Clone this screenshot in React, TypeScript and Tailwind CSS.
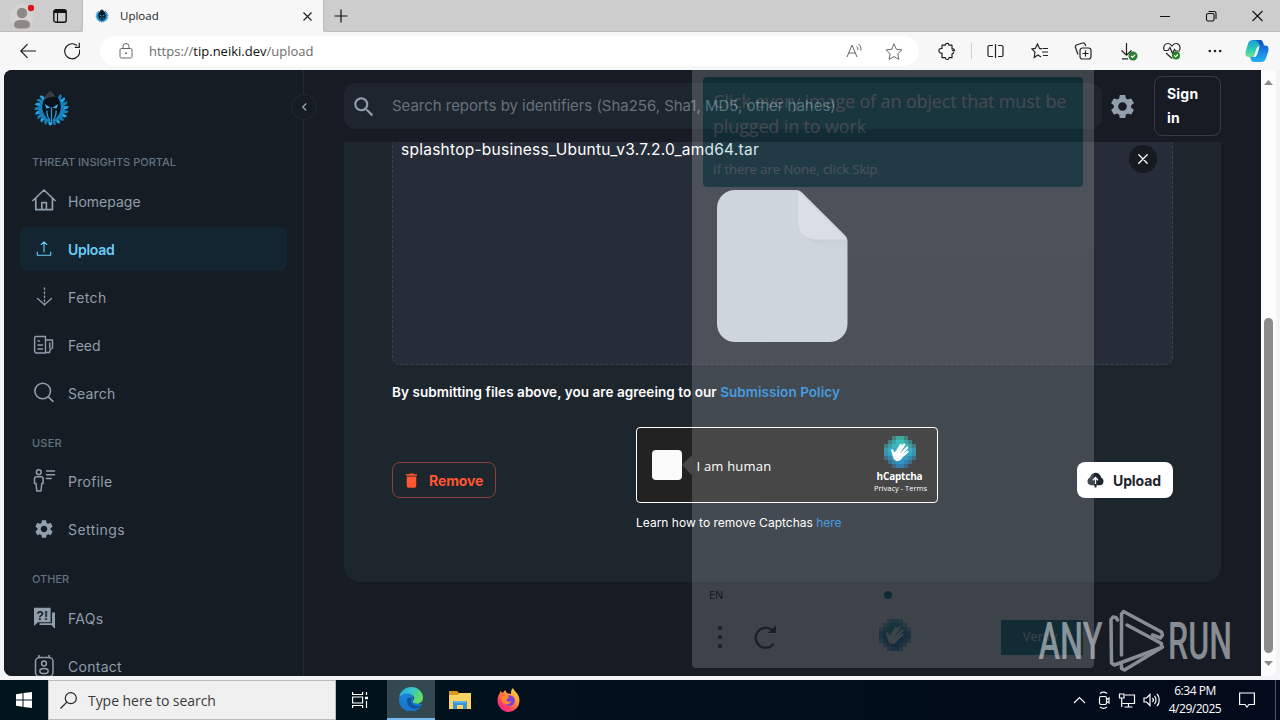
import type { ReactNode } from 'react'
import { MdDelete, MdSearch, MdSettings } from 'react-icons/md'

const PORTAL_LINKS = [
  { label: 'Homepage', icon: <HomeIcon />, track: '' },
  { label: 'Upload', icon: <UploadIcon />, track: 'tracking-[-0.3px]', active: true },
  { label: 'Fetch', icon: <FetchIcon />, track: 'tracking-[0.03em]' },
  { label: 'Feed', icon: <FeedIcon />, track: '' },
  { label: 'Search', icon: <SearchIcon />, track: 'tracking-[0.01em]' },
]

const USER_LINKS = [
  { label: 'Profile', icon: <ProfileIcon />, track: 'tracking-[0.02em]' },
  { label: 'Settings', icon: <MdSettings size={22} />, track: 'tracking-[0.03em]' },
]

const OTHER_LINKS = [
  { label: 'FAQs', icon: <FaqIcon />, track: 'tracking-[0.02em]' },
  { label: 'Contact', icon: <ContactIcon />, track: 'tracking-[0.02em]' },
]

function Stroke({
  size = 24,
  width = 1.4,
  children,
}: {
  size?: number
  width?: number
  children: ReactNode
}) {
  return (
    <svg
      width={size}
      height={size}
      viewBox="0 0 24 24"
      fill="none"
      stroke="currentColor"
      strokeWidth={width}
      strokeLinecap="round"
      strokeLinejoin="round"
      className="shrink-0"
    >
      {children}
    </svg>
  )
}

function HomeIcon() {
  return (
    <Stroke width={1.7}>
      <path d="M1 11.500 12 1 23 11.500M3.800 9.500v11.200h16.600V9.500M9.800 20.500v-6.800h4.600v6.800" />
    </Stroke>
  )
}

function UploadIcon() {
  return (
    <Stroke width={1.1}>
      <path d="M12 15V5M9.300 7.500 12 4.800l2.700 2.700M5.300 15v3.200h13.400V15" />
    </Stroke>
  )
}

function FetchIcon() {
  return (
    <Stroke width={1.3}>
      <path d="M5.500 13.500l7 6.300 7-6.300" />
      <path d="M12.500 3v17" strokeDasharray="1.500 2.500" />
    </Stroke>
  )
}

function FeedIcon() {
  return (
    <Stroke width={1.4}>
      <path d="M3.500 3.500h10v16.500H3.800L2.600 18.300V4.500zM13.800 7h6.700v8l-2.200 1.500-.8 3h-3.700M17.700 10v5M6 8h1.500M6 12h4.500M6 16h4.500" />
    </Stroke>
  )
}

function SearchIcon() {
  return (
    <Stroke width={1.600}>
      <circle cx="10.700" cy="10" r="7.800" />
      <path d="m16.300 15.800 4.700 4.500" />
    </Stroke>
  )
}

function ProfileIcon() {
  return (
    <Stroke width={1.500}>
      <circle cx="6.800" cy="3.200" r="2.400" />
      <path d="M4.500 7.800h4.600c1.400 0 2 .8 2 2v4.700H9.800L9 22H4.800L4 14.500H2.500V9.800c0-1.200.8-2 2-2z" />
      <path d="M14.500 2h8M14.500 5.800h8M14.500 9.600h4.700" />
    </Stroke>
  )
}

function FaqIcon() {
  return (
    <svg width="24" height="24" viewBox="0 0 24 24" fill="currentColor">
      <path d="M2 1.800h16.600v14.400H6L2 20z" />
      <path d="M20 6.500h3v16.300L19.200 19H7.500v-1.800H20z" />
      <text
        x="10.200"
        y="13.600"
        fontSize="12.500"
        fontWeight="700"
        textAnchor="middle"
        fill="#161c24"
        fontFamily="Liberation Sans, sans-serif"
      >
        ?!
      </text>
    </svg>
  )
}

function ContactIcon() {
  return (
    <Stroke width={1.500}>
      <rect x="3.500" y="3.500" width="17.500" height="19" rx="4" />
      <circle cx="12" cy="9.500" r="2.400" />
      <ellipse cx="12" cy="17" rx="4.200" ry="2.600" />
      <path d="M7 1.500v2M17 1.500v2" />
    </Stroke>
  )
}

function Crest({ size }: { size: number }) {
  const feathers = Array.from({ length: 18 }, (_, i) => -52 + (i * 284) / 17)
  return (
    <svg width={size} height={size} viewBox="0 0 36 36" className="shrink-0">
      {feathers.map((deg, i) => (
        <path
          key={deg}
          d="M26 15.800 35 16.300l-1.500 2.400L26 20.500z"
          fill={i % 2 ? '#22a3e6' : '#157fb8'}
          transform={`rotate(${deg} 18 18)`}
        />
      ))}
      <ellipse cx="18" cy="19" rx="12.500" ry="12" fill="#1583bb" />
      <path d="M18 1c-5 3-8.500 8-9 15-.4 6 3.500 11 9 16 5.500-5 9.400-10 9-16C26.500 9 23 4 18 1z" fill="#07121b" />
      <path d="M17 1c-4 2-6 6-6 9 3-3 8-4 11-3C21 4 19 2 17 1z" fill="#3b3a3f" />
      <path d="m11.500 13.500 5.500 3.800-4 .7zM24.500 13.500 19 17.300l4 .7z" fill="#39b4f2" />
      <path d="M18 17v17M13.500 20c0 4 1.500 8 3 10M22.500 20c0 4-1.500 8-3 10" stroke="#2f9ad6" strokeWidth="1.300" fill="none" />
    </svg>
  )
}

const PIXEL_ROWS = ['..1221..', '.123321.', '12333321', '23333332', '23333332', '12333321', '.123321.', '..1221..']
const PIXEL_COLORS = ['#16b5a8', '#14b0ab', '#13a9b0', '#109eb6', '#0e92b9', '#0b87bc', '#0a7dbd', '#0874be']

function HandLogo() {
  return (
    <svg width="32" height="32" viewBox="0 0 32 32" className="shrink-0">
      {PIXEL_ROWS.map((row, y) =>
        row.split('').map((cell, x) =>
          cell === '.' ? null : (
            <rect
              key={`${x}-${y}`}
              x={x * 4}
              y={y * 4}
              width="4"
              height="4"
              fill={PIXEL_COLORS[y]}
              opacity={cell === '1' ? 0.5 : cell === '2' ? 0.8 : 1}
            />
          ),
        )
      )}
      <g stroke="#fff" strokeWidth="2.400" strokeLinecap="round" fill="none">
        <path d="m12 17 4.800-8M14.200 17.500 20.200 8.500M16 19l7.300-7.500M17 21l6.500-5.200" />
        <path d="M10 20 8.300 14.500" />
      </g>
      <path d="M8.800 18c.8-2 3-3 5.200-2.500l5 3c0 3-2 6.500-5.500 6.500-3 0-4.900-2.500-4.700-7z" fill="#fff" />
    </svg>
  )
}

function NavGroup({
  links,
}: {
  links: { label: string; icon: ReactNode; track: string; active?: boolean }[]
}) {
  return (
    <nav className="flex flex-col gap-1">
      {links.map((link) => (
        <a
          key={link.label}
          className={
            link.active
              ? 'flex h-11 items-center gap-3 rounded-lg bg-[#142532] pl-3 text-[14px] font-semibold text-[#68cdf9]'
              : 'flex h-11 items-center gap-3 rounded-lg pl-3 text-[14px] text-[#919eab]'
          }
        >
          <span className="flex w-6 justify-center">{link.icon}</span>
          <span className={link.track}>{link.label}</span>
        </a>
      ))}
    </nav>
  )
}

function TitleBar() {
  return (
    <div className="flex h-8 shrink-0 bg-[#cdcdcd]">
      <div className="flex w-[83px] items-center rounded-br-md border-r border-b border-[#bdbdbd]">
        <svg width="24" height="26" viewBox="0 0 24 26" className="ml-[10px]">
          <circle cx="12" cy="13" r="11.500" fill="#d4d3d2" />
          <circle cx="12" cy="10" r="5.200" fill="#8c8987" />
          <path d="M4 22c0-4 3-5 8-5s8 1 8 5c0 3-3 3.500-8 3.500S4 25 4 22z" fill="#8c8987" />
          <circle cx="21" cy="5" r="3.200" fill="#e0131c" />
        </svg>
        <svg width="14" height="14" viewBox="0 0 14 14" fill="none" stroke="#111" className="ml-[19px]">
          <rect x=".8" y=".8" width="12.400" height="12.400" rx="2" strokeWidth="1.400" />
          <path d="M1 2.500h12" strokeWidth="3" />
          <path d="M4.500 3v10" />
        </svg>
      </div>
      <div className="flex w-[240px] items-center bg-[#f7f7f7] text-[12px] text-[#1b1b1b]">
        <span className="ml-3">
          <Crest size={14} />
        </span>
        <span className="ml-[11px] flex-1 font-['Open_Sans',sans-serif] text-[11.500px]">Upload</span>
        <svg width="9" height="9" viewBox="0 0 9 9" stroke="#222" strokeWidth="1.200" className="mr-[11px]">
          <path d="m.5.5 8 8M8.500.5l-8 8" />
        </svg>
      </div>
      <div className="flex flex-1 items-center rounded-bl-md border-b border-l border-[#bdbdbd]">
        <svg width="14" height="14" viewBox="0 0 14 14" stroke="#111" strokeWidth="1.200" className="ml-[10px]">
          <path d="M7 .5v13M.5 7h13" />
        </svg>
        <svg
          width="103"
          height="12"
          viewBox="0 0 103 12"
          fill="none"
          stroke="#111"
          strokeWidth="1.100"
          className="mr-[17px] ml-auto"
        >
          <path d="M0 6.500h10M92.500 1l10 10M102.500 1l-10 10" />
          <rect x="46.500" y="3.500" width="7.500" height="7.500" rx="1.500" />
          <path d="M48.500 1.500h5.500a2 2 0 0 1 2 2V9" />
        </svg>
      </div>
    </div>
  )
}

function AddressBar() {
  return (
    <div className="flex h-[38px] shrink-0 items-center bg-[#f7f7f7] text-[#1b1b1b]">
      <svg width="60" height="18" viewBox="0 0 60 18" fill="none" stroke="#1b1b1b" strokeWidth="1.200" className="ml-[20px]">
        <path d="M16 9H.8M7.500 2.200.8 9l6.700 6.800" />
        <path d="M59.500 7.500A7.500 7.500 0 1 1 57 3.500M59.300.8v4.500h-4.500" />
      </svg>
      <div className="ml-5 flex h-[30px] w-[819px] items-center rounded-full bg-white text-[#6b6b6b]">
        <svg width="14" height="16" viewBox="0 0 14 16" fill="none" stroke="#666" className="ml-[19px]">
          <rect x="1" y="5.500" width="12" height="9.500" rx="1.500" />
          <path d="M4 5.500V3.500a3 3 0 0 1 6 0v2" />
          <circle cx="7" cy="10.200" r=".6" fill="#666" />
        </svg>
        <span className="mt-px ml-4 font-['Open_Sans',sans-serif] text-[13px]">
          https://<span className="text-[#111]">tip.neiki.dev</span>/upload
        </span>
        <svg width="17" height="16" viewBox="0 0 17 16" fill="none" stroke="#666" className="ml-auto">
          <path d="m1 14 5-12 5 12M2.800 10h6.500M10.500 3.500c1 .8 1.500 2 1.300 3.500M12.500 1c2 1.500 2.800 4 2.300 6.500" />
        </svg>
        <span className="mt-px mr-[15px] ml-[21px]">
          <Stroke size={20} width={1.200}>
            <path d="m12 2.500 2.900 6.200 6.600.8-4.900 4.600 1.300 6.700-5.900-3.300-5.900 3.300 1.300-6.700-4.900-4.600 6.600-.8z" />
          </Stroke>
        </span>
      </div>
      <div className="flex flex-1 items-center">
        <span className="ml-[18px]">
          <Stroke size={20} width={1.400}>
            <path d="M6 5h4a2.200 2.200 0 0 1 4.400 0H18v4.500h1a2 2 0 0 1 2 2h-2.500M6 5v4H5a2.500 2.500 0 0 0 0 5.500h1V20h4a2.200 2.200 0 0 0 4.400 0H18v-4.500a2 2 0 0 0 2-2" />
          </Stroke>
        </span>
        <span className="ml-[14px] h-4 w-px bg-[#d0d0d0]" />
        <svg width="17" height="14" viewBox="0 0 17 14" fill="none" stroke="#222" strokeWidth="1.200" className="ml-[15px]">
          <path d="M8.500 0v14M6 1.500H2.500a1.500 1.500 0 0 0-1.500 1.500v8a1.500 1.500 0 0 0 1.500 1.500H6M11 1.500h3.500A1.500 1.500 0 0 1 16 3v8a1.500 1.500 0 0 1-1.500 1.500H11" />
        </svg>
        <svg width="18" height="16" viewBox="0 0 18 16" fill="none" stroke="#222" strokeWidth="1.200" className="ml-[27px]">
          <path d="m11 5.800-2.500-.4L6.500 1 4.300 5.400 1 6l3 3.200-.8 5.300L7 12l3 2M11.500 5.500H17M11 9h6M12 12.500h5" />
        </svg>
        <svg width="18" height="18" viewBox="0 0 18 18" fill="none" stroke="#222" strokeWidth="1.200" className="ml-[25px]">
          <rect x="6" y="6" width="11" height="11" rx="2.500" />
          <path d="M11.500 8.500v6M8.500 11.500h6M4 12.500 1.500 5.500A2 2 0 0 1 2.500 3l6-2a2 2 0 0 1 2.500 1l.8 2" />
        </svg>
        <svg width="18" height="19" viewBox="0 0 18 19" fill="none" stroke="#222" strokeWidth="1.200" className="ml-[28px]">
          <path d="M6.500 1v12M1.500 8.500l5 4.700 5-4.700M2 16.800h6" />
          <circle cx="13" cy="14" r="4.500" fill="#27812b" stroke="none" />
          <path d="m11 14 1.500 1.500 2.700-2.800" stroke="#fff" />
        </svg>
        <svg width="18" height="18" viewBox="0 0 18 18" fill="none" stroke="#222" strokeWidth="1.200" className="ml-[25px]">
          <path d="M1 8c-1-4 1-6.500 4-6.500 2 0 3 1 4 2.500 1-1.500 2-2.500 4-2.500 3 0 5 3 3.500 6.500M1 8.500h4l2-3 2.500 6 2-4 1 1.500h4.500M3 11l6 5.500" />
          <circle cx="13" cy="13.500" r="4" fill="#27812b" stroke="none" />
          <path d="m11.300 13.500 1.300 1.300 2.300-2.500" stroke="#fff" />
        </svg>
        <svg width="14" height="4" viewBox="0 0 14 4" fill="#222" className="ml-[27px]">
          <circle cx="1.800" cy="2" r="1.300" />
          <circle cx="7" cy="2" r="1.300" />
          <circle cx="12.200" cy="2" r="1.300" />
        </svg>
        <svg width="24" height="24" viewBox="0 0 24 24" className="ml-[23px]">
          <defs>
            <linearGradient id="copilotLeft" x1="0" y1="0" x2="0" y2="1">
              <stop offset="0" stopColor="#1b9bd8" />
              <stop offset=".6" stopColor="#2fd0b0" />
              <stop offset="1" stopColor="#7be08a" />
            </linearGradient>
            <linearGradient id="copilotRight" x1="0" y1="0" x2="0" y2="1">
              <stop offset="0" stopColor="#1263d8" />
              <stop offset="1" stopColor="#22b4ee" />
            </linearGradient>
          </defs>
          <path d="M8 1h7c3 0 3 3 4 6h-4c-2 0-3 1-3.500 3l-2 6c-.5 1.500-1 2-2.500 2H3.500C.5 18 0 15 .8 12l2.500-8C4 2 5.500 1 8 1z" fill="url(#copilotLeft)" />
          <path d="M16 23H9c-2.500 0-3-2-4-5h3c2 0 3-1 3.500-3l2-6c.5-1.500 1-2.500 3-2.500h4c3 0 3.500 3 2.700 6l-2.500 7.500C20 22 18.500 23 16 23z" fill="url(#copilotRight)" />
          <path d="M8 1h7c2.500 0 3 2.500 4 5.500h-3.500C14 6.500 14 1 8 1z" fill="#1555c0" />
          <path d="m11.500 10 2-2h1l-2 7-2 3H9z" fill="#e8f6ff" />
        </svg>
      </div>
    </div>
  )
}

function Sidebar() {
  return (
    <aside className="flex w-[300px] shrink-0 flex-col border-r border-[#232a32] bg-[#161c24] px-4">
      <div className="mt-5 ml-[13px] h-[38px]">
        <Crest size={37} />
      </div>
      <h2 className="mt-[26px] mb-[8px] ml-3 text-[11px] leading-[18px] font-medium text-[#637381]">
        THREAT INSIGHTS PORTAL
      </h2>
      <NavGroup links={PORTAL_LINKS} />
      <h2 className="mt-[19px] mb-[7px] ml-3 text-[11px] leading-[18px] font-medium tracking-[0.02em] text-[#637381]">
        USER
      </h2>
      <NavGroup links={USER_LINKS} />
      <h2 className="mt-[19px] mb-[8px] ml-3 text-[11px] leading-[18px] font-medium text-[#637381]">OTHER</h2>
      <NavGroup links={OTHER_LINKS} />
    </aside>
  )
}

function SearchHeader() {
  return (
    <header className="flex h-[72px] shrink-0 items-start bg-[#161b24] pl-10">
      <div className="mt-[13px] flex h-[46px] w-[758px] items-center rounded-xl bg-[#1f252e] pt-px pl-[7px]">
        <MdSearch size={26} color="#919eab" />
        <span className="ml-[15px] text-[15px] tracking-[-0.03px] text-[#66717c]">
          Search reports by identifiers (Sha256, Sha1, MD5, other hahes)
        </span>
      </div>
      <MdSettings size={29} color="#919eab" className="mt-[22px] ml-[6px]" />
      <button className="mt-[6px] ml-[17px] h-[60px] w-[67px] rounded-lg border border-[#363d46] pl-3 text-left text-[14px] leading-6 font-bold tracking-[0.2px] text-white">
        Sign
        <br />
        in
      </button>
    </header>
  )
}

function FileThumb() {
  return (
    <svg width="131" height="152" viewBox="0 0 131 153" preserveAspectRatio="none" className="self-center">
      <defs>
        <linearGradient id="foldShade" x1="0" y1="0" x2="0" y2="1">
          <stop offset="0" stopColor="#b3bcc5" />
          <stop offset="1" stopColor="#c4cdd5" />
        </linearGradient>
      </defs>
      <path d="M18 0h61c3 0 4.500 1 6.500 3l42 42c2 2 3 4 3 7v83a18 18 0 0 1-18 18H18a18 18 0 0 1-18-18V18A18 18 0 0 1 18 0z" fill="#c4cdd5" />
      <path d="M82 36c2 10 10 14 18 14h30v10c-22-3-42-4-48-24z" fill="url(#foldShade)" />
      <path d="M81 1 129.500 49.500H98a17 17 0 0 1-17-17z" fill="#d2d9e0" />
    </svg>
  )
}

function Dropzone() {
  return (
    <div className="mx-12 flex h-[223px] flex-col rounded-b-lg border border-t-0 border-dashed border-[#3a424c] bg-[#272d38]">
      <div className="flex h-12 shrink-0 items-start justify-between pr-[15px] pl-2">
        <span className="text-[15.500px] leading-[15px] tracking-[0.25px] text-white">
          splashtop-business_Ubuntu_v3.7.2.0_amd64.tar
        </span>
        <button className="mt-[3px] flex h-7 w-7 items-center justify-center rounded-full bg-[#161b22]">
          <svg width="10" height="10" viewBox="0 0 10 10" stroke="#fff" strokeWidth="1.300" strokeLinecap="round">
            <path d="m.8.8 8.400 8.400M9.200.8.8 9.200" />
          </svg>
        </button>
      </div>
      <FileThumb />
    </div>
  )
}

function CaptchaBox() {
  return (
    <div className="flex h-[76px] w-[302px] items-center rounded border border-white bg-[#222]">
      <span className="ml-[15px] h-[30px] w-[30px] rounded bg-[#fafafa]" />
      <span className="mt-[3px] ml-[15px] flex-1 font-['Open_Sans',sans-serif] text-[13px] tracking-[0.2px] text-white">
        I am human
      </span>
      <div className="mr-[9px] flex w-[56px] flex-col items-center font-['Open_Sans',sans-serif] text-white">
        <HandLogo />
        <span className="mt-[2px] text-[10px] leading-[13px] font-bold tracking-[-0.2px]">hCaptcha</span>
        <span className="pl-[2px] text-[7.500px] leading-[11px] font-medium whitespace-nowrap">Privacy - Terms</span>
      </div>
    </div>
  )
}

function UploadCard() {
  return (
    <section className="ml-10 h-[440px] w-[877px] rounded-b-2xl bg-[#1d252d]">
      <Dropzone />
      <p className="mt-[17px] ml-12 text-[13.500px] leading-5 font-semibold tracking-[0.055px] text-white">
        By submitting files above, you are agreeing to our <a className="text-[#2288dd]">Submission Policy</a>
      </p>
      <div className="mx-12 mt-[25px] flex h-[106px] items-center justify-between">
        <button className="flex h-9 w-[104px] items-center rounded-lg border border-[#8a3f38] pl-[9px] text-[14px] font-bold text-[#ff5630]">
          <MdDelete size={19} />
          <span className="ml-2 tracking-[-0.1px]">Remove</span>
        </button>
        <div>
          <CaptchaBox />
          <p className="mt-[10px] pl-[0.500px] text-[12px] leading-5 text-white">
            Learn how to remove Captchas <a className="text-[#2288dd]">here</a>
          </p>
        </div>
        <button className="flex h-9 w-24 items-center rounded-lg bg-white pl-[10px] text-[14px] font-bold text-[#1c252e]">
          <svg width="17" height="16" viewBox="0 0 17 16">
            <path d="M4 13.200A4 4 0 0 1 .5 9.300c0-1.800 1-3 2.500-3.700C3.500 3 5.700.8 8.500.8s5 2 5.600 4.600c1.500.7 2.400 2 2.400 3.800a4 4 0 0 1-4 4z" fill="#1c252e" />
            <path d="M8.500 5.500v7.500M6 8.200l2.500-2.700L11 8.200" stroke="#fff" strokeWidth="1.300" fill="none" />
            <path d="M7.500 12h2v3.500h-2z" fill="#1c252e" />
          </svg>
          <span className="ml-[9px] tracking-[-0.1px]">Upload</span>
        </button>
      </div>
    </section>
  )
}

// Challenge popup while it is still fading in
function ChallengePopup() {
  return (
    <div className="absolute top-[70px] left-[692px] flex h-[598px] w-[402px] flex-col rounded-b bg-white px-[11px] pt-[7px] font-['Open_Sans',sans-serif] opacity-[0.170]">
      <svg width="10" height="20" viewBox="0 0 10 20" className="absolute top-[385px] -left-[10px]">
        <path d="M10 0 0 10l10 10z" fill="#fff" />
      </svg>
      <div className="h-[110px] shrink-0 rounded-sm bg-[#00838f] px-[10px] pt-[12px] text-white">
        <p className="text-[18px] leading-[25px] font-medium tracking-[-0.15px] whitespace-nowrap">
          Click every image of an object that must be
          <br />
          plugged in to work
        </p>
        <p className="mt-[20px] text-[13px] leading-5">If there are None, click Skip</p>
      </div>
      <div className="mt-auto flex items-center px-[6px]">
        <span className="text-[11px] leading-4 text-black">EN</span>
        <span className="ml-[161px] h-2 w-2 rounded-full bg-[#00838f]" />
      </div>
      <div className="mt-[16px] mb-[13px] flex h-9 items-center">
        <svg width="6" height="24" viewBox="0 0 6 24" fill="#333" className="ml-[14px]">
          <circle cx="3" cy="3" r="2" />
          <circle cx="3" cy="12" r="2" />
          <circle cx="3" cy="21" r="2" />
        </svg>
        <svg width="24" height="24" viewBox="0 0 24 24" fill="none" stroke="#333" strokeWidth="2.200" className="ml-[30px]">
          <path d="M20.500 19A10 10 0 1 1 19 5" />
          <path d="M23 0v8h-8z" fill="#333" stroke="none" />
        </svg>
        <span className="-mt-1 ml-[102px]">
          <HandLogo />
        </span>
        <span className="ml-auto flex h-[35px] w-[82px] items-center justify-center bg-[#00838f] pr-1 text-[13px] text-white">
          Verify
        </span>
      </div>
    </div>
  )
}

function Watermark() {
  return (
    <svg
      width="200"
      height="64"
      viewBox="0 0 200 64"
      className="absolute top-[608px] left-[1038px] opacity-60"
      fill="#d5d9de"
      fontFamily="Roboto, sans-serif"
      fontSize="52"
      fontWeight="500"
    >
      <text x="0.500" y="51" textLength="64" lengthAdjust="spacingAndGlyphs">
        ANY
      </text>
      <g
        transform="translate(70 0)"
        fill="none"
        stroke="#d5d9de"
        strokeWidth="3.500"
        strokeLinejoin="round"
        strokeLinecap="round"
      >
        <path d="M9.500 12 8 9.500 5 9l-2 2.500.5 43.500 3 2 47-17.500v-4L19 17" />
        <path d="M13.500 47V6l2-2.500L53.500 24l1 3-2 3-8-3" />
        <path d="M13.500 57.500v3l3 1.500 38-23" />
      </g>
      <text x="130" y="51" textLength="64" lengthAdjust="spacingAndGlyphs">
        RUN
      </text>
    </svg>
  )
}

function ScrollRail() {
  return (
    <div className="flex w-[15px] flex-col items-center rounded-br-lg bg-[#fcfcfc]">
      <svg width="9" height="5" viewBox="0 0 9 5" fill="#8a8a8a" className="mt-[10px]">
        <path d="M4.500 0 9 5H0z" />
      </svg>
      <span className="mt-[233px] h-[335px] w-[9px] rounded-full bg-[#8b8b8b]" />
      <svg width="9" height="5" viewBox="0 0 9 5" fill="#8a8a8a" className="mt-2">
        <path d="M4.500 5 9 0H0z" />
      </svg>
    </div>
  )
}

function EdgeLogo() {
  return (
    <svg width="24" height="24" viewBox="0 0 24 24">
      <defs>
        <linearGradient id="edgeTop" x1="0" y1="0" x2="1" y2=".4">
          <stop offset="0" stopColor="#2a9fe0" />
          <stop offset=".5" stopColor="#35c4d0" />
          <stop offset="1" stopColor="#62dd62" />
        </linearGradient>
        <linearGradient id="edgeBase" x1="0" y1="0" x2="0" y2="1">
          <stop offset="0" stopColor="#1b86d8" />
          <stop offset="1" stopColor="#1673c8" />
        </linearGradient>
      </defs>
      <path d="M0 12a12 12 0 0 1 12-9l3 12 8 2.500A12 12 0 0 1 0 12z" fill="url(#edgeBase)" />
      <path d="M0 11C1 4 6 0 12 0c7 0 12 5 12 10.500 0 4-3 6-6.200 6-3 0-4.300-1.200-3.800-2.200.8-1 1.200-2 1.200-3C15 8.500 12 6.500 8.500 6.500 4.500 6.500 1 8.500 0 11z" fill="url(#edgeTop)" />
      <path d="M8.500 11.500C7 15 9 20 14.500 21.500c3 .5 6-.5 8-3.500-3 1.500-8 1.500-9.800-2-.7-2-.2-3.500.8-4.500-1.500-1.500-4-1.500-5 0z" fill="#0f549f" />
    </svg>
  )
}

function FolderLogo() {
  return (
    <svg width="22" height="20" viewBox="0 0 22 20">
      <path d="M0 1h8l2 2h12v5H0z" fill="#d89a1c" />
      <path d="M0 5h9l2-2h11v16H0z" fill="#fbd367" />
      <path d="M4 19v-8h14v8h-4v-4H8v4z" fill="#3a94d4" />
      <path d="M5 11h12v2H5z" fill="#59b2ea" />
    </svg>
  )
}

function FirefoxLogo() {
  return (
    <svg width="24" height="24" viewBox="0 0 24 24">
      <defs>
        <linearGradient id="foxBody" x1="1" y1="0" x2="0.200" y2="1">
          <stop offset="0" stopColor="#fff04a" />
          <stop offset=".4" stopColor="#ff9a2e" />
          <stop offset=".75" stopColor="#ff4060" />
          <stop offset="1" stopColor="#e02090" />
        </linearGradient>
      </defs>
      <path d="M3 5c0-1 .5-2 1-2.500C4 4 5 4.500 6 5c.5-1.500 1.500-2.500 2.500-3 0 1.500 1 2.500 2.500 3.500l3 .5c0-2.500 0-4.500 2-6 .5 3 6.500 5.500 6.500 12.500A11.300 11.300 0 0 1 12 24 11.500 11.500 0 0 1 .5 12.500C.5 9 1.500 6.500 3 5z" fill="url(#foxBody)" />
      <circle cx="12.500" cy="12.500" r="5.300" fill="#7a3fe0" />
      <path d="M4 9c3-2 6-1.500 8.500 0L9 12c1 2 4 2 5.500 1-1 3-4 4-7 3-2-1-3.500-4-3.500-7z" fill="#ff8a28" />
    </svg>
  )
}

function Taskbar() {
  return (
    <footer className="flex h-10 shrink-0 items-center bg-gradient-to-r from-[#00151d] to-[#030a1b] font-['Open_Sans',sans-serif] text-white">
      <div className="flex w-12 justify-center">
        <svg width="16" height="16" viewBox="0 0 16 16" fill="#fff">
          <path d="M0 2.200 6.500 1.300v6.200H0zM7.500 1.100 16 0v7.500H7.500zM0 8.500h6.500v6.200L0 13.800zM7.500 8.500H16V16l-8.500-1.100z" />
        </svg>
      </div>
      <div className="flex h-10 w-[288px] items-center border border-[#bcbcbc] bg-[#f0f0f0] text-[#3b3b3b]">
        <svg width="17" height="17" viewBox="0 0 17 17" fill="none" stroke="#222" strokeWidth="1.200" className="ml-[11px]">
          <circle cx="10.800" cy="6.200" r="5.500" />
          <path d="M6.800 10.200.5 16.500" />
        </svg>
        <span className="ml-[11px] text-[14px] tracking-[-0.05px]">Type here to search</span>
      </div>
      <svg width="17" height="16" viewBox="0 0 17 16" fill="none" stroke="#fff" strokeWidth="1.200" className="ml-[16px]">
        <path d="M.6 0v2.500h10V0M.6 16v-2.500h10V16M14.500 0v3M14.500 9v7" />
        <path d="M.6 5h10v6H.6z" />
        <path d="M13 6h3" strokeWidth="2.500" />
      </svg>
      <div className="ml-[18px] flex h-10 w-12 items-center justify-center border-b-2 border-[#76b9ed] bg-[#334850]">
        <EdgeLogo />
      </div>
      <span className="ml-[14px]">
        <FolderLogo />
      </span>
      <span className="ml-[26px]">
        <FirefoxLogo />
      </span>
      <svg
        width="88"
        height="18"
        viewBox="0 0 88 18"
        fill="none"
        stroke="#fff"
        strokeWidth="1.200"
        className="ml-auto"
      >
        <path d="m1 12 5.500-5.500L12 12" />
        <rect x="26.500" y="5.500" width="7" height="8" rx="1.500" />
        <path d="m33.500 8.500 2.500-1.500v5l-2.500-1.500M27 2.500c2-1.500 5-1.500 7 0M27 16c2 1.500 5 1.500 7 0" />
        <path d="M52 4h9.500v8.500H49.500M55.500 12.500V16M51.500 16h8M46.500 3h4.500v4h-4.500zM48.700 7v9" />
        <path d="M71 7h2.500L77 3.500v11L73.500 11H71zM79.500 7c1 1.200 1 3 0 4M81.500 5c2 2 2 6 0 8M84 3c3 3 3 9 0 12" />
      </svg>
      <div className="ml-[6px] w-[56px] text-center text-[12px] leading-[18px] tracking-[-0.04em] whitespace-nowrap">
        <div>6:34 PM</div>
        <div>4/29/2025</div>
      </div>
      <svg width="16" height="16" viewBox="0 0 16 16" fill="none" stroke="#fff" strokeWidth="1.200" className="mr-[20px] ml-[16px]">
        <path d="M.6 1h14.800v11.500H10L8 15l-2-2.500H.6z" />
      </svg>
      <span className="mr-[4px] h-10 w-px bg-[#4c5563]" />
    </footer>
  )
}

export default function App() {
  return (
    <div className="relative flex h-[720px] w-[1280px] flex-col overflow-hidden bg-[#f3f4f7] font-['Inter',sans-serif]">
      <TitleBar />
      <AddressBar />
      <div className="mb-1 ml-1 flex h-[606px] shrink-0">
        <div className="flex w-[1257px] overflow-hidden rounded-l-lg bg-[#161b24]">
          <Sidebar />
          <main className="flex-1">
            <SearchHeader />
            <UploadCard />
          </main>
        </div>
        <ScrollRail />
      </div>
      <Taskbar />

      <button className="absolute top-[94px] left-[291px] flex h-[26px] w-[26px] items-center justify-center rounded-full border border-[#232a32] bg-[#161c24]">
        <svg width="5" height="8" viewBox="0 0 5 8" fill="none" stroke="#919eab" strokeWidth="1.400">
          <path d="M4.200.5.8 4l3.400 3.500" />
        </svg>
      </button>
      <ChallengePopup />
      <Watermark />
    </div>
  )
}
